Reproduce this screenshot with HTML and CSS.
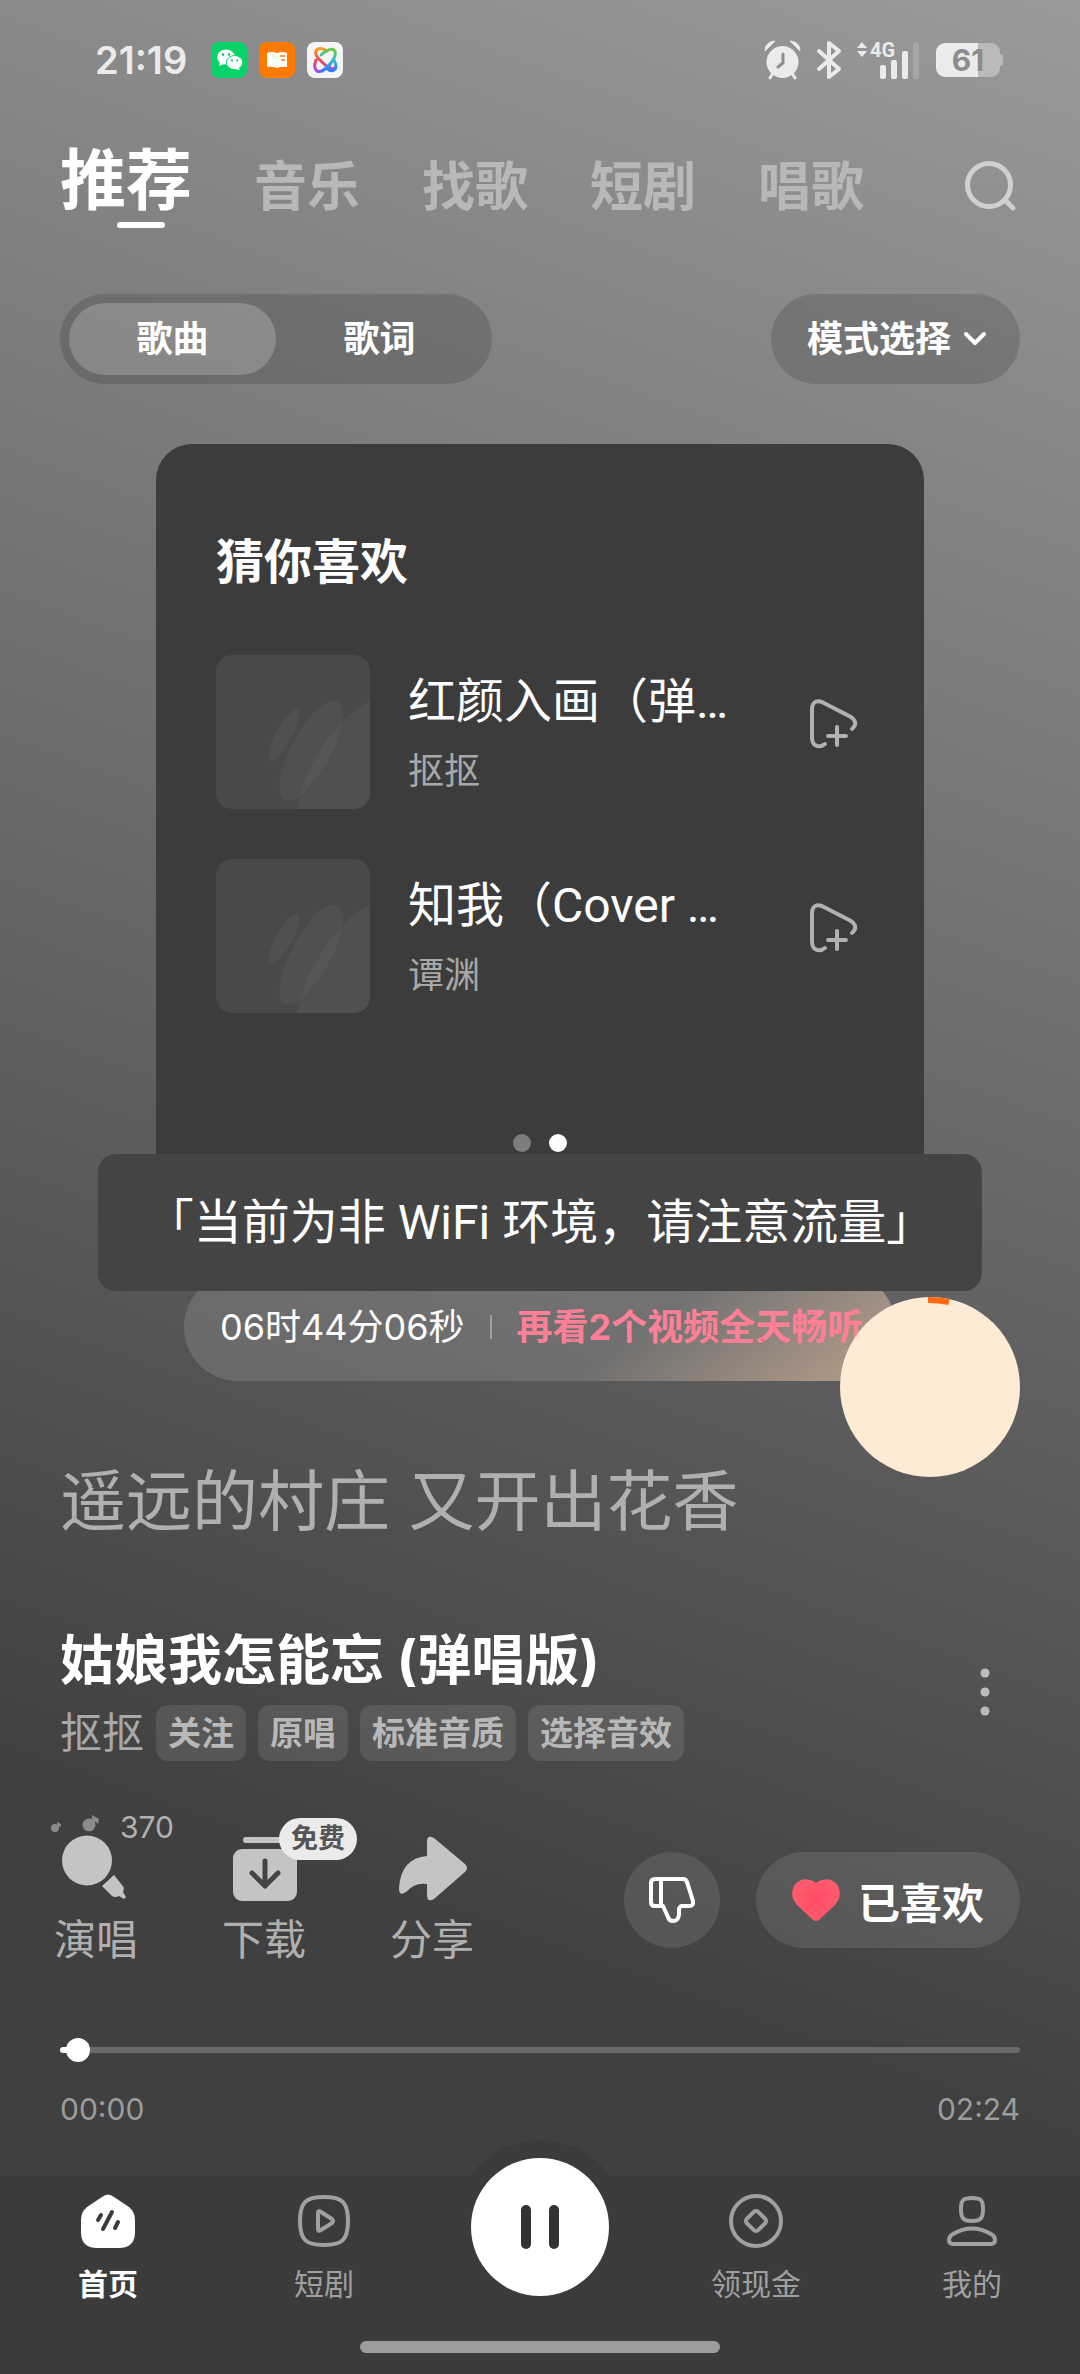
FILE: index.html
```html
<!DOCTYPE html>
<html lang="zh-CN">
<head>
<meta charset="utf-8">
<meta name="viewport" content="width=device-width, initial-scale=1">
<title>推荐</title>
<link rel="stylesheet" href="styles.css">
</head>
<body>
<div class="app">
  <div class="status">
    <span class="clock">21:19</span>
    <div class="notices">
      <svg class="app-icon" viewBox="0 0 36 36" aria-hidden="true">
        <rect width="36" height="36" rx="8" fill="#07d267"/>
        <ellipse cx="15" cy="15" rx="9" ry="7.500" fill="#fff"/>
        <path d="M9 19l-1 5 5-2z" fill="#fff"/>
        <ellipse cx="23.500" cy="20.500" rx="8.300" ry="7" fill="#fff" stroke="#07d267"/>
        <path d="M27 25l2 3-5-1z" fill="#fff"/>
        <g fill="#07b85b"><circle cx="12" cy="12.500" r="1.200"/><circle cx="18" cy="12.500" r="1.200"/><circle cx="21" cy="18.500" r="1"/><circle cx="26" cy="18.500" r="1"/></g>
      </svg>
      <svg class="app-icon" viewBox="0 0 36 36" aria-hidden="true">
        <rect width="36" height="36" rx="8" fill="#ff7a00"/>
        <path d="M8 11q5-2 10 0q5-2 10 0v14q-5-1-10 1q-5-2-10-1z" fill="#fff"/>
        <path d="M21 14h5M22 18h4" stroke="#ff7a00" stroke-width="1.500"/>
      </svg>
      <svg class="app-icon" viewBox="0 0 36 36" aria-hidden="true">
        <defs>
          <linearGradient id="orbA" x1="0" y1="0" x2="0" y2="1"><stop offset="0" stop-color="#ff9a1f"/><stop offset=".5" stop-color="#f04a4a"/><stop offset="1" stop-color="#9b4dff"/></linearGradient>
          <linearGradient id="orbB" x1="0" y1="0" x2="0" y2="1"><stop offset="0" stop-color="#6cc644"/><stop offset=".5" stop-color="#3fb8c8"/><stop offset="1" stop-color="#2f7bff"/></linearGradient>
        </defs>
        <rect width="36" height="36" rx="8" fill="#f5f5f7"/>
        <path d="M20 9q-8-5-11 0q-2 4 6 11q9 9 13 6M9 18q-3 8 1 11q5 2 13-6" fill="none" stroke="url(#orbA)" stroke-width="3" stroke-linecap="round"/>
        <path d="M14 13q9-8 13-5q4 4-4 14q-4 5-8 7M27 18q4 8 0 10q-3 2-8-2" fill="none" stroke="url(#orbB)" stroke-width="3" stroke-linecap="round"/>
      </svg>
    </div>
    <div class="system">
      <svg width="37" height="40" viewBox="0 0 37 40" aria-hidden="true">
        <circle cx="18.500" cy="22" r="16" fill="#ebebeb"/>
        <path d="M1 11Q1 2 11 1zM36 11Q36 2 26 1z" fill="#ebebeb" stroke="#ebebeb" stroke-linejoin="round"/>
        <path d="M9 33l-3 5M28 33l3 5" stroke="#ebebeb" stroke-width="3" stroke-linecap="round"/>
        <path d="M19 14v9l-5 4" fill="none" stroke="#8e8e8e" stroke-width="3" stroke-linecap="round" stroke-linejoin="round"/>
      </svg>
      <svg width="24" height="40" viewBox="0 0 24 40" aria-hidden="true">
        <path d="M2 11L22 29L12 37V3L22 11L2 29" fill="none" stroke="#ebebeb" stroke-width="4" stroke-linejoin="round" stroke-linecap="round"/>
      </svg>
      <div class="signal">
        <svg width="63" height="40" viewBox="0 0 63 40" aria-hidden="true">
          <path d="M0 8l5-6 5 6zM0 11l5 6 5-6z" fill="#ebebeb"/>
          <g fill="#ebebeb"><rect x="23" y="25" width="6" height="14" rx="2"/><rect x="34" y="20" width="6" height="19" rx="2"/><rect x="45" y="11" width="6" height="28" rx="2"/></g>
          <rect x="56" y="2" width="6" height="37" rx="2" fill="#a6a6a6"/>
        </svg>
        <span class="network">4G</span>
      </div>
      <span class="battery">61</span>
    </div>
  </div>

  <header class="topbar">
    <nav class="tabs">
      <a class="tab tab-active" href="#">推荐</a>
      <a class="tab" href="#">音乐</a>
      <a class="tab" href="#">找歌</a>
      <a class="tab" href="#">短剧</a>
      <a class="tab" href="#">唱歌</a>
    </nav>
    <button class="plain" aria-label="搜索">
      <svg width="60" height="60" viewBox="0 0 60 60" fill="none" stroke="#d0d0d0" stroke-width="5" stroke-linecap="round"><circle cx="29" cy="35" r="21.500"/><path d="M45 50l8 8"/></svg>
    </button>
  </header>

  <div class="controls">
    <div class="segmented">
      <button class="segment segment-on">歌曲</button>
      <button class="segment">歌词</button>
    </div>
    <button class="mode">模式选择
      <svg width="24" height="16" viewBox="0 0 24 16" fill="none" stroke="#fff" stroke-width="4" stroke-linecap="round" stroke-linejoin="round"><path d="M3 3l9 9 9-9"/></svg>
    </button>
  </div>

  <div class="stage">
    <section class="card">
      <h2 class="card-title">猜你喜欢</h2>
      <ul class="songs">
        <li class="song">
          <svg class="cover" viewBox="0 0 154 154" aria-hidden="true">
            <rect width="154" height="154" fill="#494949"/>
            <g fill="#505050"><ellipse cx="68" cy="80" rx="8" ry="29" transform="rotate(29 68 80)"/><ellipse cx="95" cy="96" rx="20" ry="56" transform="rotate(28 95 96)"/><path d="M82 154Q84 128 102 100Q126 58 154 46V154Z"/></g>
            <path d="M84 142Q88 120 102 100Q110 82 126 68Q120 104 84 142Z" fill="#565656"/>
          </svg>
          <div class="song-text"><span class="song-name">红颜入画（弹…</span><span class="song-by">抠抠</span></div>
          <button class="play-next" aria-label="下一首播放"><svg width="48" height="50" viewBox="0 0 48 50" fill="none" stroke="#b1b1b1" stroke-width="4" stroke-linecap="round"><path d="M15 45Q10 49 5 46Q2 44 2 38V11Q2 0 12 3L41 18Q49 24 42 30M27 28v18M18 37h18"/></svg></button>
        </li>
        <li class="song">
          <svg class="cover" viewBox="0 0 154 154" aria-hidden="true">
            <rect width="154" height="154" fill="#494949"/>
            <g fill="#505050"><ellipse cx="68" cy="80" rx="8" ry="29" transform="rotate(29 68 80)"/><ellipse cx="95" cy="96" rx="20" ry="56" transform="rotate(28 95 96)"/><path d="M82 154Q84 128 102 100Q126 58 154 46V154Z"/></g>
            <path d="M84 142Q88 120 102 100Q110 82 126 68Q120 104 84 142Z" fill="#565656"/>
          </svg>
          <div class="song-text"><span class="song-name">知我（Cover …</span><span class="song-by">谭渊</span></div>
          <button class="play-next" aria-label="下一首播放"><svg width="48" height="50" viewBox="0 0 48 50" fill="none" stroke="#b1b1b1" stroke-width="4" stroke-linecap="round"><path d="M15 45Q10 49 5 46Q2 44 2 38V11Q2 0 12 3L41 18Q49 24 42 30M27 28v18M18 37h18"/></svg></button>
        </li>
      </ul>
      <div class="dots"><span class="dot"></span><span class="dot dot-on"></span></div>
    </section>
    <div class="offer">
      <span>06时44分06秒</span>
      <span class="offer-rule"></span>
      <a class="offer-link" href="#">再看2个视频全天畅听</a>
    </div>
    <div class="toast" role="status">「当前为非 WiFi 环境，请注意流量」</div>
    <button class="float" aria-label="奖励">
      <svg width="180" height="180" viewBox="0 0 180 180" fill="none"><path d="M88 3Q98 3 109 5" stroke="#ff6a13" stroke-width="6"/></svg>
    </button>
  </div>

  <p class="lyric">遥远的村庄 又开出花香</p>

  <section class="now">
    <div>
      <h1 class="now-title">姑娘我怎能忘 (弹唱版)</h1>
      <div class="meta">
        <span class="artist">抠抠</span>
        <button class="tag">关注</button>
        <button class="tag">原唱</button>
        <button class="tag">标准音质</button>
        <button class="tag">选择音效</button>
      </div>
    </div>
    <button class="plain" aria-label="更多"><svg width="70" height="50" viewBox="0 0 70 50" fill="#bdbdbd"><circle cx="35" cy="5" r="4.500"/><circle cx="35" cy="24" r="4.500"/><circle cx="35" cy="43" r="4.500"/></svg></button>
  </section>

  <section class="actions">
    <div class="action-list">
      <button class="action">
        <svg class="action-icon" viewBox="0 0 84 92" fill="#c4c4c4"><circle cx="33" cy="48.500" r="25"/><path d="M60 63L48 74L58 84Q61 86 65 84L70 87L72 85L69 80Q71 76 68 73Z"/><g fill="#8c8c8c"><circle cx="1" cy="16" r="4"/><circle cx="35" cy="13" r="6.500"/><path d="M3 16V10l4 2v3l-2-1v3zM38 13V3l7 4-1 5-3-3v6z"/></g></svg>
        <span class="count">370</span>
        演唱
      </button>
      <button class="action">
        <svg class="action-icon" viewBox="0 0 84 92"><rect x="21" y="25" width="50" height="6" rx="3" fill="#c4c4c4"/><rect x="11" y="37" width="64" height="52" rx="9" fill="#c4c4c4"/><path d="M43 49v25M30 61l13 13 13-13" fill="none" stroke="#444" stroke-width="5" stroke-linecap="round" stroke-linejoin="round"/></svg>
        <span class="badge">免费</span>
        下载
      </button>
      <button class="action">
        <svg class="action-icon" viewBox="0 0 84 92"><path d="M37 44V30Q37 22 44 26L75 52Q79 56 75 60L44 87Q37 91 37 83V72Q25 70 16 80Q9 85 9 76Q11 46 37 44Z" fill="#c4c4c4"/></svg>
        分享
      </button>
    </div>
    <div class="votes">
      <button class="vote vote-round" aria-label="不喜欢"><svg width="46" height="46" viewBox="0 0 46 46" fill="none" stroke="#fff" stroke-width="4" stroke-linejoin="round"><path d="M6 2H34Q37 2 38 5L44 24Q45 29 40 29H33Q31 29 30 32V38Q29 44 24 44Q20 44 19 40L14 29H6Q2 29 2 25V6Q2 2 6 2ZM12 2V29"/></svg></button>
      <button class="vote"><svg width="48" height="42" viewBox="0 0 48 42" aria-hidden="true"><defs><radialGradient id="heart"><stop offset="0" stop-color="#ff4a64"/><stop offset="1" stop-color="#ff5c6e"/></radialGradient></defs><path d="M24 42Q22 42 20 40L5 26Q-3 17 2 7Q8 -2 18 1Q22 2 24 4Q26 2 30 1Q40 -2 46 7Q51 17 43 26L28 40Q26 42 24 42Z" fill="url(#heart)"/></svg>已喜欢</button>
    </div>
  </section>

  <section class="player">
    <input class="seek" type="range" min="0" max="144" value="1" aria-label="播放进度">
    <div class="times"><span>00:00</span><span>02:24</span></div>
  </section>

  <footer class="bottom">
    <nav class="dock">
      <a class="dock-item dock-on" href="#">
        <svg width="54" height="54" viewBox="0 0 54 54"><path d="M21 3Q27-2 33 3L48 13Q54 18 54 26V38Q54 54 38 54H16Q0 54 0 38V26Q0 18 6 13Z" fill="#fff"/><path d="M20 21l-3 5M31 18L22 35M37 28l-3 6" stroke="#3b3b3b" stroke-width="4" stroke-linecap="round"/></svg>
        首页
      </a>
      <a class="dock-item" href="#">
        <svg width="54" height="54" viewBox="0 0 54 54" fill="none" stroke="#a0a0a0" stroke-width="4" stroke-linejoin="round"><path d="M27 3C45 3 51 8 51 27S45 51 27 51S3 46 3 27S9 3 27 3Z"/><path d="M21 19Q21 16 24 18L35 25Q37 27 35 29L24 36Q21 38 21 35Z"/></svg>
        短剧
      </a>
      <button class="play" aria-label="暂停"><svg width="40" height="46" viewBox="0 0 40 46" fill="#333"><rect x="1" y="1" width="10" height="44" rx="5"/><rect x="29" y="1" width="10" height="44" rx="5"/></svg></button>
      <a class="dock-item" href="#">
        <svg width="54" height="54" viewBox="0 0 54 54" fill="none" stroke="#a0a0a0" stroke-width="4"><circle cx="27" cy="27" r="25"/><rect x="19" y="19" width="16" height="16" rx="3" transform="rotate(45 27 27)"/></svg>
        领现金
      </a>
      <a class="dock-item" href="#">
        <svg width="54" height="54" viewBox="0 0 54 54" fill="none" stroke="#a0a0a0" stroke-width="4"><path d="M27 4C36 4 38 6 38 15S36 27 27 27S16 24 16 15S18 4 27 4Z"/><path d="M9 50Q4 50 4 46Q4 42 8 40Q27 29 46 40Q50 42 50 46Q50 50 45 50Z"/></svg>
        我的
      </a>
    </nav>
    <div class="indicator"></div>
  </footer>
</div>
</body>
</html>
```
FILE: styles.css
```css
* { box-sizing: border-box; }

body {
  margin: 0;
  color: #fff;
  font-family: Inter, "Noto Sans CJK SC", sans-serif;
  font-size: 36px;
}

h1, h2, p, ul { margin: 0; padding: 0; }
ul { list-style: none; }
a { color: inherit; text-decoration: none; }
svg { display: block; flex: none; overflow: visible; }

button {
  border: 0;
  padding: 0;
  background: none;
  color: inherit;
  font: inherit;
  cursor: pointer;
}

.app {
  display: flex;
  flex-direction: column;
  min-height: 100vh;
  background: linear-gradient(200deg, #9a9a9a, #404040 78%);
}

/* system status bar */
.status {
  display: flex;
  align-items: center;
  padding: 40px 77px 0 95px;
}
.clock {
  color: #ebebeb;
  font-size: 38px;
  font-weight: 600;
  line-height: 40px;
}
.notices { display: flex; gap: 12px; margin-left: 24px; }
.app-icon { width: 36px; height: 36px; }
.system {
  display: flex;
  align-items: center;
  gap: 16px;
  margin-left: auto;
}
.signal { position: relative; }
.network {
  position: absolute;
  left: 13px;
  top: 0;
  color: #ebebeb;
  font: 700 20px/20px Roboto, sans-serif;
}
.battery {
  position: relative;
  width: 64px;
  margin-right: 3px;
  border-radius: 9px;
  background: linear-gradient(90deg, #ebebeb 65%, #bababa 65%);
  color: #8c8c8c;
  font-size: 30px;
  font-weight: 700;
  line-height: 34px;
  text-align: center;
}
.battery::after {
  content: "";
  position: absolute;
  left: 100%;
  top: 11px;
  width: 3px;
  height: 12px;
  border-radius: 0 3px 3px 0;
  background: #bababa;
}

/* channel tabs */
.topbar {
  display: flex;
  align-items: center;
  justify-content: space-between;
  padding: 64px 60px 0;
}
.tabs { display: flex; align-items: flex-end; gap: 62px; }
.tab {
  color: #b8b8b8;
  font-size: 53px;
  font-weight: 700;
  line-height: 58px;
}
.tab-active {
  position: relative;
  color: #fff;
  font-size: 66px;
  line-height: 72px;
}
.tab-active::after {
  content: "";
  position: absolute;
  left: 57px;
  top: 78px;
  width: 48px;
  height: 6px;
  border-radius: 3px;
  background: #fff;
}

/* song / lyric switch and mode menu */
.controls {
  display: flex;
  justify-content: space-between;
  padding: 78px 60px 60px;
  font-weight: 700;
}
.segmented {
  display: flex;
  padding: 9px;
  border-radius: 45px;
  background: rgba(0, 0, 0, .14);
}
.segment { width: 207px; border-radius: 36px; line-height: 72px; }
.segment-on { background: rgba(255, 255, 255, .2); }
.mode {
  display: flex;
  align-items: center;
  gap: 12px;
  padding: 0 33px 0 36px;
  border-radius: 45px;
  background: rgba(0, 0, 0, .14);
  line-height: 90px;
}

/* recommendation card with the layers over it */
.stage {
  position: relative;
  display: flex;
  flex-direction: column;
  align-items: center;
  gap: 24px;
  padding: 0 60px;
}
.card {
  width: 80%;
  padding: 88px 60px 97px;
  border-radius: 36px;
  background: #3c3c3c;
}
.card-title { font-size: 48px; font-weight: 700; line-height: 60px; }
.songs { display: grid; gap: 50px; margin-top: 63px; }
.song { display: flex; align-items: center; gap: 38px; }
.cover { width: 154px; height: 154px; border-radius: 16px; overflow: hidden; }
.song-text {
  display: flex;
  flex: 1;
  flex-direction: column;
  gap: 15px;
  padding-top: 2px;
  white-space: nowrap;
}
.song-name {
  font-family: Roboto, "Noto Sans CJK SC", sans-serif;
  font-size: 48px;
  line-height: 60px;
}
.song-by { color: #a8a8a8; font-size: 36px; line-height: 48px; }
.play-next { padding: 0 6px 16px 0; }
.dots {
  display: flex;
  justify-content: center;
  gap: 18px;
  margin-top: 121px;
}
.dot { width: 18px; height: 18px; border-radius: 9px; background: #7d7d7d; }
.dot-on { background: #fff; }

.offer {
  display: flex;
  align-items: center;
  gap: 25px;
  width: 712px;
  max-width: 100%;
  padding: 0 36px;
  border-radius: 54px;
  background:
    linear-gradient(145deg, transparent 62%, rgba(255, 205, 165, .4) 92%),
    rgba(255, 255, 255, .13);
  line-height: 108px;
  white-space: nowrap;
}
.offer-rule { flex: none; width: 2px; height: 24px; background: #a0a0a0; }
.offer-link { color: #ff8096; font-weight: 700; }

.toast {
  position: absolute;
  left: 50%;
  bottom: 90px;
  transform: translateX(-50%);
  padding: 0 48px;
  border-radius: 18px;
  background: #444;
  font-family: Roboto, "Noto Sans CJK SC", sans-serif;
  font-size: 48px;
  line-height: 137px;
  white-space: nowrap;
}
.float {
  position: absolute;
  right: 60px;
  bottom: -96px;
  border-radius: 50%;
  background: #fdebd5;
}

.lyric {
  padding: 80px 60px 0;
  color: #b0b0b0;
  font-size: 66px;
  line-height: 80px;
}

/* current song */
.now {
  display: flex;
  align-items: center;
  justify-content: space-between;
  padding: 84px 60px 0;
}
.now-title { font-size: 54px; font-weight: 700; line-height: 72px; }
.meta { display: flex; align-items: center; gap: 12px; margin-top: 8px; }
.artist { color: #a8a8a8; font-size: 42px; line-height: 56px; }
.tag {
  padding: 0 12px;
  border-radius: 12px;
  background: rgba(255, 255, 255, .1);
  color: #b8b8b8;
  font-size: 33px;
  font-weight: 700;
  line-height: 56px;
}

.actions {
  display: flex;
  align-items: flex-end;
  justify-content: space-between;
  padding: 51px 60px 0 54px;
}
.action-list { display: flex; gap: 84px; }
.action {
  position: relative;
  color: #b0b0b0;
  font-size: 42px;
  line-height: 48px;
  white-space: nowrap;
}
.action-icon { width: 84px; height: 92px; margin-bottom: 12px; }
.count {
  position: absolute;
  left: 66px;
  top: 0;
  font-size: 30px;
  line-height: 30px;
}
.badge {
  position: absolute;
  left: 57px;
  top: 6px;
  padding: 0 12px;
  border-radius: 21px;
  background: #ebebeb;
  color: #555;
  font-size: 27px;
  font-weight: 700;
  line-height: 42px;
}
.votes { display: flex; gap: 36px; padding-bottom: 16px; }
.vote {
  display: flex;
  align-items: center;
  justify-content: center;
  gap: 18px;
  height: 96px;
  padding: 0 36px;
  border-radius: 48px;
  background: rgba(255, 255, 255, .1);
  font-size: 42px;
  font-weight: 700;
}
.vote-round { width: 96px; padding: 0; }

/* playback position */
.player { padding: 74px 60px 49px; }
.seek {
  display: block;
  width: 100%;
  height: 24px;
  margin: 0;
  appearance: none;
  background: none;
}
.seek::-webkit-slider-runnable-track {
  height: 6px;
  border-radius: 3px;
  background: linear-gradient(90deg, #fff 2%, #696969 2%);
}
.seek::-webkit-slider-thumb {
  appearance: none;
  width: 24px;
  height: 24px;
  margin-top: -9px;
  border-radius: 50%;
  background: #fff;
}
.times {
  display: flex;
  justify-content: space-between;
  margin-top: 29px;
  color: #9c9c9c;
  font-size: 30px;
  line-height: 36px;
}

/* bottom navigation */
.bottom {
  margin-top: auto;
  padding: 18px 0 21px;
  background: #3b3b3b;
}
.dock {
  display: grid;
  grid-template-columns: repeat(5, 1fr);
  justify-items: center;
}
.dock-item {
  display: flex;
  flex-direction: column;
  align-items: center;
  gap: 18px;
  color: #a0a0a0;
  font-size: 30px;
  line-height: 36px;
}
.dock-on { color: #fff; font-weight: 700; }
.play {
  display: grid;
  place-items: center;
  width: 138px;
  height: 138px;
  margin-top: -36px;
  border-radius: 50%;
  background: #fff;
  box-shadow: 0 0 0 18px #3b3b3b;
}
.indicator {
  width: 360px;
  height: 12px;
  margin: 39px auto 0;
  border-radius: 6px;
  background: #9d9d9d;
}
```
